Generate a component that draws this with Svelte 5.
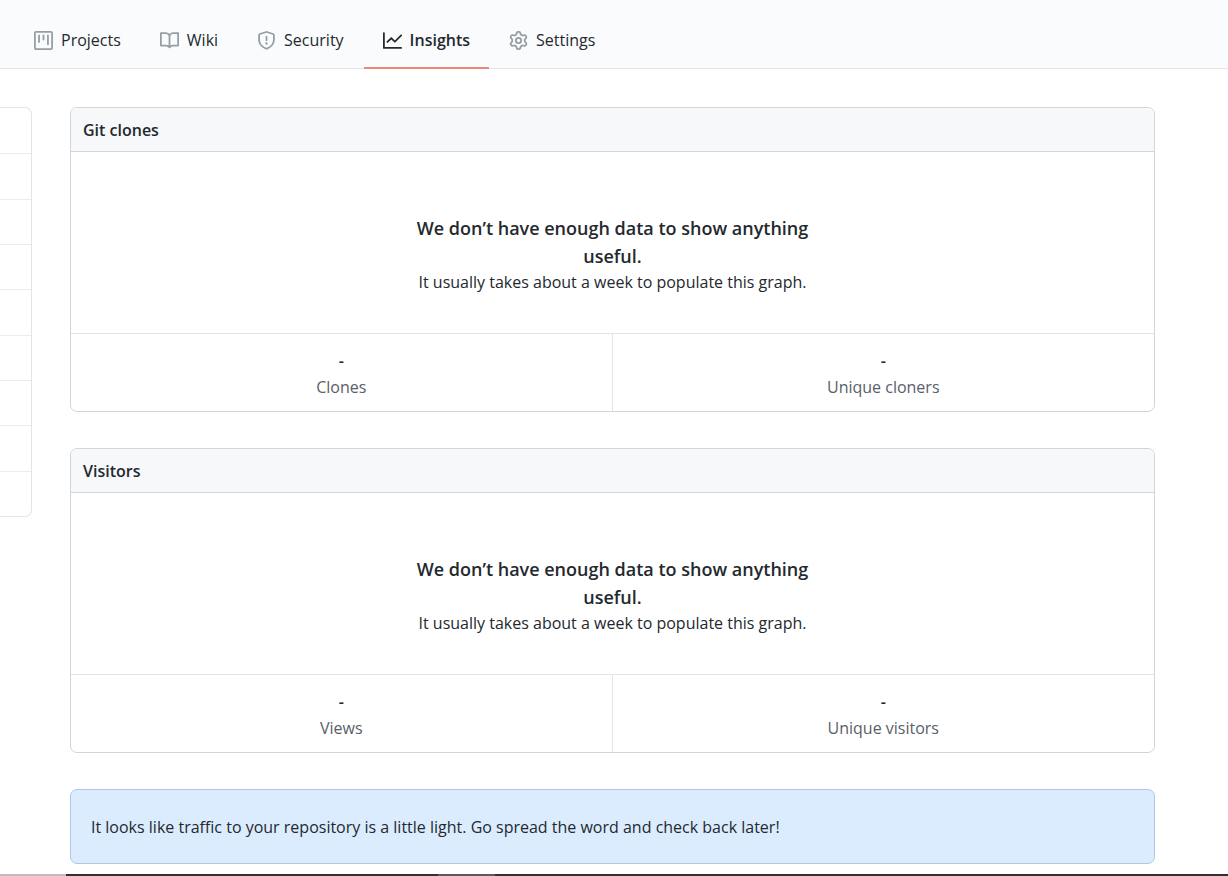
<script>
  const tabs = [
    { label: 'Projects', icon: 'M1.75 0A1.75 1.75 0 000 1.75v12.5C0 15.216.784 16 1.75 16h12.5A1.75 1.75 0 0016 14.25V1.75A1.75 1.75 0 0014.25 0H1.75zM1.5 1.75a.25.25 0 01.25-.25h12.5a.25.25 0 01.25.25v12.5a.25.25 0 01-.25.25H1.75a.25.25 0 01-.25-.25V1.75zM11.75 3a.75.75 0 00-.75.75v7.5a.75.75 0 001.5 0v-7.5a.75.75 0 00-.75-.75zm-8.25.75a.75.75 0 011.5 0v5.5a.75.75 0 01-1.5 0v-5.5zM8 3a.75.75 0 00-.75.75v3.5a.75.75 0 001.5 0v-3.5A.75.75 0 008 3z' },
    { label: 'Wiki', icon: 'M0 1.75A.75.75 0 01.75 1h4.253c1.227 0 2.317.59 3 1.501A3.744 3.744 0 0111.006 1h4.245a.75.75 0 01.75.75v10.5a.75.75 0 01-.75.75h-4.507a2.25 2.25 0 00-1.591.659l-.622.621a.75.75 0 01-1.06 0l-.622-.621A2.25 2.25 0 005.258 13H.75a.75.75 0 01-.75-.75V1.75zm8.755 3a2.25 2.25 0 012.25-2.25H14.5v9h-3.757c-.71 0-1.4.201-1.992.572l.004-7.322zm-1.504 7.324l.004-5.073-.002-2.253A2.25 2.25 0 005.003 2.5H1.5v9h3.757a3.75 3.75 0 011.994.574z' },
    { label: 'Security', icon: 'M7.467.133a1.75 1.75 0 011.066 0l5.25 1.68A1.75 1.75 0 0115 3.48V7c0 1.566-.32 3.182-1.303 4.682-.983 1.498-2.585 2.813-5.032 3.855a1.7 1.7 0 01-1.33 0c-2.447-1.042-4.049-2.357-5.032-3.855C1.32 10.182 1 8.566 1 7V3.48a1.75 1.75 0 011.217-1.667l5.25-1.68zm.61 1.429a.25.25 0 00-.153 0l-5.25 1.68a.25.25 0 00-.174.238V7c0 1.358.275 2.666 1.057 3.86.784 1.194 2.121 2.34 4.366 3.297a.2.2 0 00.154 0c2.245-.956 3.582-2.104 4.366-3.298C13.225 9.666 13.5 8.36 13.5 7V3.48a.25.25 0 00-.174-.237l-5.25-1.68zM9 10.5a1 1 0 11-2 0 1 1 0 012 0zm-.25-5.75a.75.75 0 10-1.5 0v3a.75.75 0 001.5 0v-3z' },
    { label: 'Insights', current: true, icon: 'M1.5 1.75a.75.75 0 00-1.5 0v12.5c0 .414.336.75.75.75h14.5a.75.75 0 000-1.5H1.5V1.75zm14.28 2.53a.75.75 0 00-1.06-1.06L10 7.94 7.53 5.47a.75.75 0 00-1.06 0L3.22 8.72a.75.75 0 001.06 1.06L7 7.06l2.47 2.47a.75.75 0 001.06 0l5.25-5.25z' },
    { label: 'Settings', icon: 'M7.429 1.525a6.593 6.593 0 011.142 0c.036.003.108.036.137.146l.289 1.105c.147.56.55.967.997 1.189.174.086.341.183.501.29.417.278.97.423 1.53.27l1.102-.303c.11-.03.175.016.195.046.219.31.41.641.573.989.014.031.022.11-.059.19l-.815.806c-.411.406-.562.957-.53 1.456a4.588 4.588 0 010 .582c-.032.499.119 1.05.53 1.456l.815.806c.08.08.073.159.059.19a6.494 6.494 0 01-.573.99c-.02.029-.086.074-.195.045l-1.103-.303c-.559-.153-1.112-.008-1.529.27-.16.107-.327.204-.5.29-.449.222-.851.628-.998 1.189l-.289 1.105c-.029.11-.101.143-.137.146a6.613 6.613 0 01-1.142 0c-.036-.003-.108-.037-.137-.146l-.289-1.105c-.147-.56-.55-.967-.997-1.189a4.502 4.502 0 01-.501-.29c-.417-.278-.97-.423-1.53-.27l-1.102.303c-.11.03-.175-.016-.195-.046a6.492 6.492 0 01-.573-.989c-.014-.031-.022-.11.059-.19l.815-.806c.411-.406.562-.957.53-1.456a4.587 4.587 0 010-.582c.032-.499-.119-1.05-.53-1.456l-.815-.806c-.08-.08-.073-.159-.059-.19a6.44 6.44 0 01.573-.99c.02-.029.086-.075.195-.045l1.103.303c.559.153 1.112.008 1.529-.27.16-.107.327-.204.5-.29.449-.222.851-.628.998-1.189l.289-1.105c.029-.11.101-.143.137-.146zM8 0c-.236 0-.47.01-.701.03-.743.065-1.29.615-1.458 1.261l-.29 1.106c-.017.066-.078.158-.211.224a5.994 5.994 0 00-.668.386c-.123.082-.233.09-.3.071L3.27 2.776c-.644-.177-1.392.02-1.82.63a7.977 7.977 0 00-.704 1.217c-.315.675-.111 1.422.363 1.891l.815.806c.05.048.098.147.088.294a6.084 6.084 0 000 .772c.01.147-.038.246-.088.294l-.815.806c-.474.469-.678 1.216-.363 1.891.2.428.436.835.704 1.218.428.609 1.176.806 1.82.63l1.103-.303c.066-.019.176-.011.299.071.213.143.436.272.668.386.133.066.194.158.212.224l.289 1.106c.169.646.715 1.196 1.458 1.26a8.094 8.094 0 001.402 0c.743-.064 1.29-.614 1.458-1.26l.29-1.106c.017-.066.078-.158.211-.224a5.98 5.98 0 00.668-.386c.123-.082.233-.09.3-.071l1.102.302c.644.177 1.392-.02 1.82-.63.268-.382.505-.789.704-1.217.315-.675.111-1.422-.364-1.891l-.814-.806c-.05-.048-.098-.147-.088-.294a6.1 6.1 0 000-.772c-.01-.147.039-.246.088-.294l.814-.806c.475-.469.679-1.216.364-1.891a7.992 7.992 0 00-.704-1.218c-.428-.609-1.176-.806-1.82-.63l-1.103.303c-.066.019-.176.011-.299-.071a5.991 5.991 0 00-.668-.386c-.133-.066-.194-.158-.212-.224L10.16 1.29C9.99.645 9.444.095 8.701.031A8.094 8.094 0 008 0zm1.5 8a1.5 1.5 0 11-3 0 1.5 1.5 0 013 0zM11 8a3 3 0 11-6 0 3 3 0 016 0z' }
  ];
  const cards = [
    { title: 'Git clones', stats: ['Clones', 'Unique cloners'] },
    { title: 'Visitors', stats: ['Views', 'Unique visitors'] }
  ];
  const menuRows = Array.from({ length: 9 });
</script>

<div class="page">
  <nav>
    {#each tabs as tab}
      <a href="#{tab.label.toLowerCase()}" class:current={tab.current} aria-current={tab.current ? 'page' : undefined}>
        <svg viewBox="0 0 16 16" aria-hidden="true"><path fill-rule="evenodd" d={tab.icon} /></svg>
        <span>{tab.label}</span>
      </a>
    {/each}
  </nav>

  <div class="columns">
    <ul class="menu">
      {#each menuRows as _}<li></li>{/each}
    </ul>
    <main>
      {#each cards as card}
        <section class="card">
          <h2>{card.title}</h2>
          <div class="blank">
            <h3>We don’t have enough data to show anything useful.</h3>
            <p>It usually takes about a week to populate this graph.</p>
          </div>
          <dl>
            {#each card.stats as stat}
              <div class="stat"><dt>{stat}</dt><dd>-</dd></div>
            {/each}
          </dl>
        </section>
      {/each}
      <p class="flash">It looks like traffic to your repository is a little light. Go spread the word and check back later!</p>
    </main>
  </div>
  <div class="edge"><span class="start"></span><span class="thumb"></span></div>
</div>

<style>
  :global(body) { margin: 0; background: #fff; }
  .page {
    display: flex;
    flex-direction: column;
    min-height: 100vh;
    overflow-x: hidden;
    color: #24292e;
    font: 16px/26px "Segoe UI", "Open Sans", "Noto Sans", sans-serif;
  }
  h2, h3, p, dl, dd, ul { margin: 0; padding: 0; }
  nav {
    display: flex;
    gap: 1px;
    padding-left: 15px;
    background: #fafbfd;
    border-bottom: 1px solid #e1e4e8;
  }
  nav a {
    display: flex;
    align-items: center;
    gap: 8px;
    padding: 27px 19px 14px;
    margin-bottom: -1px;
    border-bottom: 2px solid transparent;
    color: #24292e;
    text-decoration: none;
  }
  nav svg { width: 19px; height: 19px; flex: none; fill: #959da5; }
  nav .current { font-weight: 600; border-color: #e8897a; }
  nav .current svg { fill: #24292e; }
  .columns {
    display: grid;
    grid-template-columns: 32px minmax(0, 1fr);
    column-gap: 38px;
    align-items: start;
    padding: 38px 73px 10px 0;
  }
  .menu {
    display: grid;
    grid-auto-rows: 1fr;
    height: 408px;
    list-style: none;
    border: 1px solid #e1e4e8;
    border-left: 0;
    border-radius: 0 7px 7px 0;
  }
  .menu li + li { border-top: 1px solid #eaecef; }
  main { display: grid; gap: 36px; }
  .card { border: 1px solid #d1d5da; border-radius: 7px; overflow: hidden; }
  h2 {
    padding: 9px 12px 8px;
    background: #f6f8fa;
    border-bottom: 1px solid #d1d5da;
    font-size: 16px;
    line-height: 26px;
    font-weight: 600;
  }
  .blank { padding: 62px 24px 39px; text-align: center; }
  .blank h3 { max-width: 440px; margin: 0 auto; font-size: 18px; line-height: 28px; font-weight: 600; }
  .blank p { line-height: 24px; }
  dl { display: grid; grid-template-columns: 1fr 1fr; border-top: 1px solid #e1e4e8; }
  .stat {
    display: flex;
    flex-direction: column-reverse;
    padding: 14px 0 11px;
    text-align: center;
  }
  .stat:first-child { border-right: 1px solid #e1e4e8; }
  dt { color: #586069; }
  dd { font-weight: 600; }
  .flash {
    padding: 24px 20px 23px;
    background: #dbecff;
    border: 1px solid #b0c8e6;
    border-radius: 7px;
  }
  .edge { display: flex; height: 2px; margin-top: auto; background: #323033; }
  .start { width: 66px; margin-right: 372px; background: #bdbdbd; }
  .thumb { width: 57px; background: #5c5a5d; }
</style>
